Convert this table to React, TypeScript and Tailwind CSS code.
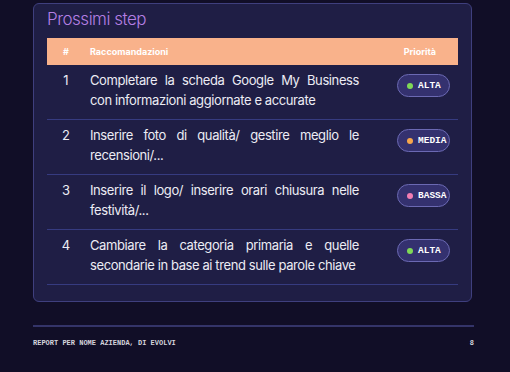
import React from "react";

type Priority = "ALTA" | "MEDIA" | "BASSA";

const rows: { n: number; text: string; priority: Priority }[] = [
  { n: 1, text: "Completare la scheda Google My Business con informazioni aggiornate e accurate", priority: "ALTA" },
  { n: 2, text: "Inserire foto di qualità/ gestire meglio le recensioni/...", priority: "MEDIA" },
  { n: 3, text: "Inserire il logo/ inserire orari chiusura nelle festività/...", priority: "BASSA" },
  { n: 4, text: "Cambiare la categoria primaria e quelle secondarie in base ai trend sulle parole chiave", priority: "ALTA" },
];

const dotColor: Record<Priority, string> = {
  ALTA: "bg-[#7fd957]",
  MEDIA: "bg-[#f6a64c]",
  BASSA: "bg-[#f27db3]",
};

function Badge({ p }: { p: Priority }) {
  return (
    <div className="flex items-center gap-[5px] h-[23px] w-[53px] rounded-full border border-[#6b69b3] bg-[#34316f] pl-[9px]">
      <span className={`w-[6px] h-[6px] rounded-full ${dotColor[p]}`} />
      <span className="text-[9.5px] font-bold text-white leading-none font-['Liberation_Mono',monospace]">{p}</span>
    </div>
  );
}

export default function App() {
  return (
    <div className="w-[510px] h-[372px] bg-[#110e27] overflow-hidden font-['Inter',sans-serif]">
      <div className="ml-[33px] w-[441px] pt-[3px]">
        {/* Card */}
        <div className="w-[439px] rounded-[6px] border border-[#3f3f7e] bg-[#1f1e45] px-[13px] pt-[3px] pb-[16px]">
          <h2 className="text-[17px] font-light leading-[24px] tracking-[-0.5px] text-[#b47ee3] mb-[7px]">Prossimi step</h2>

          {/* Table header */}
          <div className="flex items-center h-[27px] bg-[#f9b28b] text-white text-[9px] font-bold">
            <div className="w-[38px] text-center">#</div>
            <div className="ml-[5px] flex-1">Raccomandazioni</div>
            <div className="pr-[22px]">Priorità</div>
          </div>

          {/* Rows */}
          {rows.map((r) => (
            <div key={r.n} className="flex items-start border-b border-[#363b80] pt-[5px] pb-[9px]">
              <div className="w-[38px] text-center text-[13px] leading-[20px] text-[#ececf4]">{r.n}</div>
              <p className="ml-[5px] w-[269px] text-[13px] leading-[20px] tracking-[-0.4px] text-[#ececf4] text-justify">{r.text}</p>
              <div className="flex-1 flex justify-end pr-[8px] pt-[4px]">
                <Badge p={r.priority} />
              </div>
            </div>
          ))}
        </div>

        {/* Footer */}
        <div className="mt-[23px] border-t-[2px] border-[#343469]" />
        <div className="flex justify-between items-center mt-[11px] text-[7px] font-bold text-[#d4d4dc] font-['Liberation_Mono',monospace]">
          <span>REPORT PER NOME AZIENDA, DI EVOLVI</span>
          <span>8</span>
        </div>
      </div>
    </div>
  );
}
